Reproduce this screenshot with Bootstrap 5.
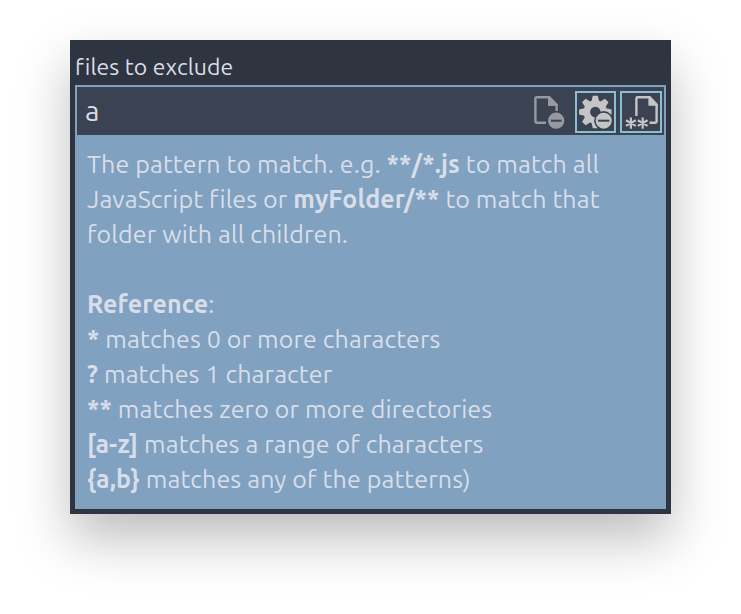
<!DOCTYPE html>
<html lang="en">
<head>
<meta charset="utf-8">
<meta name="viewport" content="width=device-width, initial-scale=1">
<title>files to exclude</title>
<link href="https://cdn.jsdelivr.net/npm/bootstrap@5.3.0/dist/css/bootstrap.min.css" rel="stylesheet">
<style>
body{min-height:614px;background:#fff;font-family:Ubuntu,"Noto Sans",sans-serif;color:#d8dee9;padding:40px 70px}
.exclude-panel{width:601px;height:474px;padding:5px;background:#2e3440;box-shadow:0 25px 50px rgba(0,0,0,.26)}
.exclude-title{height:40px;font-size:23px;line-height:44px;letter-spacing:.09px}
.pattern-input{height:50px;background:#3b4252;border:2px solid #81a1c1;border-bottom:0;padding:4px 2px 0 8px}
.pattern-value{font-size:28px;line-height:39px}
.toggle{width:42px;height:42px;border:2px solid transparent}
.toggle.w41{width:41px}
.toggle.active{border-color:#88c0d0}
.toggle svg{display:block;margin:-2px;overflow:visible}
.hint{background:#81a1c1;height:374px;padding:12px;font-size:25px;line-height:35px;letter-spacing:.12px}
.hint-line{height:35px;white-space:nowrap}
</style>
</head>
<body>
<main class="exclude-panel">
<div class="exclude-title">files to exclude</div>
<div class="pattern-input d-flex justify-content-between">
<span class="pattern-value">a</span>
<div class="d-flex gap-1">
<div class="toggle"><svg width="42" height="42" viewBox="529 91 42 42"><path d="M546 122.8H536.6Q535.4 122.8 535.4 121.6V98.4Q535.4 97.2 536.6 97.2H549L556.6 104.8V111" fill="none" stroke="#96999f" stroke-width="2.4"/><path fill="#96999f" d="M548 96.2V106H557.8V104.4L549.6 96Z"/><circle cx="556.2" cy="120.7" r="8.1" fill="#96999f"/><path d="M551 120.7h10.6" stroke="#3b4252" stroke-width="2"/></svg></div>
<div class="toggle w41 active"><svg width="41" height="42" viewBox="575 91 41 42"><g fill="#c5c5c5" transform="translate(595.3 112)"><circle r="8.5" fill="none" stroke="#c5c5c5" stroke-width="6.6"/><g id="tooth"><path d="M-3.7 -11L-2.5 -16.2H2.5L3.7 -11ZM-3.7 11L-2.5 16.2H2.5L3.7 11Z"/></g><use href="#tooth" transform="rotate(45)"/><use href="#tooth" transform="rotate(90)"/><use href="#tooth" transform="rotate(135)"/></g><circle cx="603.7" cy="120.7" r="8.8" fill="#c5c5c5" stroke="#3b4252" stroke-width="1.6"/><path d="M598 120.7h11.4" stroke="#3b4252" stroke-width="2"/></svg></div>
<div class="toggle active"><svg width="42" height="42" viewBox="620 91 42 42"><path d="M636.4 116V98.4Q636.4 97.2 637.6 97.2H649.5L656.6 104.5V121.6Q656.6 122.8 655.4 122.8H649.5" fill="none" stroke="#c5c5c5" stroke-width="2.4"/><path fill="#c5c5c5" d="M648.4 96V105.8H657.8V104.4L650 96Z"/><path d="M630.9 117.4v11.4M626 120.3l9.8 5.6M635.8 120.3l-9.8 5.6M642.7 117.4v11.4M637.8 120.3l9.8 5.6M647.6 120.3l-9.8 5.6" stroke="#c5c5c5" stroke-width="2.2"/></svg></div>
</div>
</div>
<div class="hint">
<div class="hint-line">The pattern to match. e.g. <b>**/*.js</b> to match all</div>
<div class="hint-line">JavaScript files or <b>myFolder/**</b> to match that</div>
<div class="hint-line">folder with all children.</div>
<div class="hint-line"></div>
<div class="hint-line"><b>Reference</b>:</div>
<div class="hint-line"><b>*</b> matches 0 or more characters</div>
<div class="hint-line"><b>?</b> matches 1 character</div>
<div class="hint-line"><b>**</b> matches zero or more directories</div>
<div class="hint-line"><b>[a-z]</b> matches a range of characters</div>
<div class="hint-line"><b>{a,b}</b> matches any of the patterns)</div>
</div>
</main>
<script src="https://cdn.jsdelivr.net/npm/bootstrap@5.3.0/dist/js/bootstrap.bundle.min.js"></script>
</body>
</html>
